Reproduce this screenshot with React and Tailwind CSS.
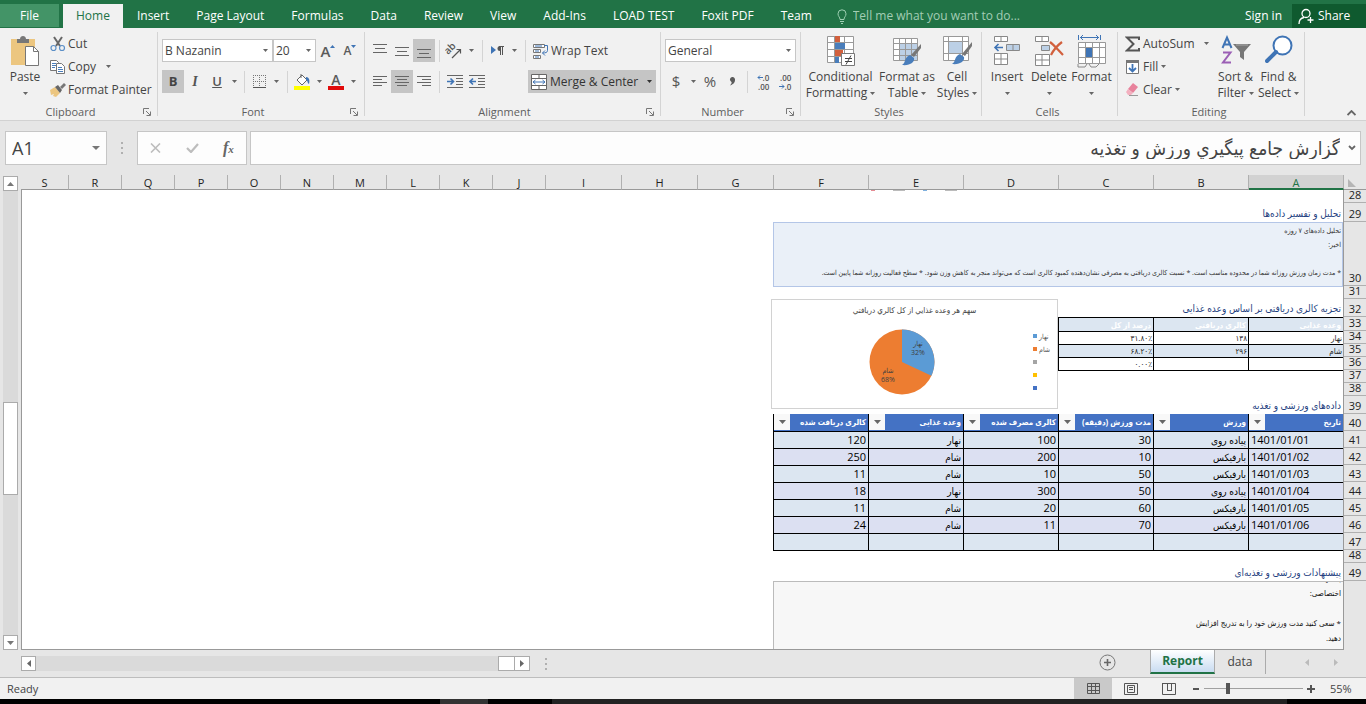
import { useState } from 'react';

const TABS = ['Home', 'Insert', 'Page Layout', 'Formulas', 'Data', 'Review', 'View', 'Add-Ins', 'LOAD TEST', 'Foxit PDF', 'Team'];

const COLUMNS = [
  { name: 'S', width: 'flex-1' },
  { name: 'R', width: 'w-[53px]' },
  { name: 'Q', width: 'w-[53px]' },
  { name: 'P', width: 'w-[53px]' },
  { name: 'O', width: 'w-[53px]' },
  { name: 'N', width: 'w-[53px]' },
  { name: 'M', width: 'w-[53px]' },
  { name: 'L', width: 'w-[53px]' },
  { name: 'K', width: 'w-[53px]' },
  { name: 'J', width: 'w-[53px]' },
  { name: 'I', width: 'w-[76px]' },
  { name: 'H', width: 'w-[76px]' },
  { name: 'G', width: 'w-[76px]' },
  { name: 'F', width: 'w-[95px]' },
  { name: 'E', width: 'w-[95px]' },
  { name: 'D', width: 'w-[95px]' },
  { name: 'C', width: 'w-[95px]' },
  { name: 'B', width: 'w-[95px]' },
  { name: 'A', width: 'w-[95px]' },
];

const ROWS = [
  [28, 'h-[13px]'], [29, 'h-[19px]'], [30, 'h-[64px]'], [31, 'h-[13px]'], [32, 'h-[18px]'],
  [33, 'h-[14px]'], [34, 'h-[13px]'], [35, 'h-[13px]'], [36, 'h-[13px]'], [37, 'h-[13px]'],
  [38, 'h-[13px]'], [39, 'h-[18px]'], [40, 'h-[17px]'], [41, 'h-[17px]'], [42, 'h-[17px]'],
  [43, 'h-[17px]'], [44, 'h-[17px]'], [45, 'h-[17px]'], [46, 'h-[17px]'], [47, 'h-[17px]'],
  [48, 'h-[13px]'], [49, 'h-[18px]'],
];

const MEALS = [
  ['نهار', '۱۳۸', '۳۱.۸۰٪'],
  ['شام', '۲۹۶', '۶۸.۲۰٪'],
  ['', '', '۰.۰۰٪'],
];

const LOG_HEAD = ['تاریخ', 'ورزش', 'مدت ورزش (دقیقه)', 'کالری مصرف شده', 'وعده غذایی', 'کالری دریافت شده'];

const LOG = [
  ['1401/01/01', 'پیاده روی', '30', '100', 'نهار', '120'],
  ['1401/01/02', 'بارفیکس', '10', '200', 'شام', '250'],
  ['1401/01/03', 'بارفیکس', '50', '10', 'شام', '11'],
  ['1401/01/04', 'پیاده روی', '50', '300', 'نهار', '18'],
  ['1401/01/05', 'بارفیکس', '60', '20', 'شام', '11'],
  ['1401/01/06', 'بارفیکس', '70', '11', 'شام', '24'],
  ['', '', '', '', '', ''],
];

const LEGEND = [
  ['نهار', 'bg-[#5b9bd5]'],
  ['شام', 'bg-[#ed7d31]'],
  ['', 'bg-[#a5a5a5]'],
  ['', 'bg-[#ffc000]'],
  ['', 'bg-[#4472c4]'],
];

function Svg({ w = 16, h = 16, children, className = '' }) {
  return (
    <svg width={w} height={h} viewBox={`0 0 ${w} ${h}`} fill="none" className={`shrink-0 ${className}`} aria-hidden="true">
      {children}
    </svg>
  );
}

function Caret({ className = 'text-[#666]' }) {
  return (
    <Svg w={5} h={3} className={className}>
      <path d="M0 0h5L2.500 3z" fill="currentColor" />
    </Svg>
  );
}

function CaretButton({ label, className = 'w-4' }) {
  return (
    <button type="button" aria-label={label} className={`flex h-[23px] shrink-0 items-center justify-center ${className}`}>
      <Caret />
    </button>
  );
}

function ToolButton({ label, active = false, width = 'w-[22px]', children }) {
  return (
    <button
      type="button"
      aria-label={label}
      aria-pressed={active}
      className={`flex h-[23px] shrink-0 items-center justify-center ${width} ${active ? 'bg-[#c5c5c5]' : 'hover:bg-[#e1e1e1]'}`}
    >
      {children}
    </button>
  );
}

function Divider({ className = '' }) {
  return <span className={`h-[22px] w-px shrink-0 bg-[#d4d4d4] ${className}`} />;
}

function Group({ label, width, launcher = false, children }) {
  return (
    <section className={`flex shrink-0 items-stretch pt-1 ${width}`} aria-label={label}>
      <div className="flex min-w-0 flex-1 flex-col">
        <div className="flex h-[72px] items-start">{children}</div>
        <div className="flex h-4 items-center pr-1">
          <span className="flex-1 text-center text-[11px] leading-4 text-[#5e5e5e]">{label}</span>
          {launcher && (
            <button type="button" aria-label={`${label} settings`} className="flex h-3 w-3 items-center justify-center">
              <Svg w={8} h={8}>
                <path d="M.5 6V.5H6M3 3l4 4M7.500 3.500v4h-4" stroke="#777" />
              </Svg>
            </button>
          )}
        </div>
      </div>
      <span className="mb-1 w-px bg-[#d4d4d4]" />
    </section>
  );
}

function Picker({ label, value, width }) {
  return (
    <span className={`relative flex h-[23px] shrink-0 ${width}`}>
      <select
        aria-label={label}
        defaultValue={value}
        className="h-full w-full appearance-none border border-[#c6c6c6] bg-white pl-[2px] text-xs leading-4 text-[#444] outline-none"
      >
        <option>{value}</option>
      </select>
      <Caret className="pointer-events-none absolute right-[5px] top-[10px] text-[#666]" />
    </span>
  );
}

function BigButton({ icon, lines, width, caretBelow = false }) {
  return (
    <button type="button" className={`flex shrink-0 flex-col items-center whitespace-nowrap pt-[3px] text-xs leading-4 text-[#444] ${width}`}>
      <span className="flex h-[34px] items-start">{icon}</span>
      <span>{lines[0]}</span>
      {caretBelow ? (
        <span className="flex h-4 items-center"><Caret /></span>
      ) : (
        <span className="flex items-center gap-[3px]">{lines[1]}<Caret /></span>
      )}
    </button>
  );
}

function SmallButton({ icon, label, caret = false, gap = 'gap-[3px]' }) {
  return (
    <button type="button" className={`flex h-[23px] items-center whitespace-nowrap text-xs leading-4 text-[#444] ${gap}`}>
      <span className="flex items-center gap-[2px]">{icon}{label}</span>
      {caret && <Caret />}
    </button>
  );
}

const PasteIcon = (
  <Svg w={30} h={32}>
    <path d="M1 4h24v26H1z" fill="#ecc680" />
    <path d="M7 4h3c0-4 6-4 6 0h3v4H7z" fill="#777" />
    <path d="M15.500 11.500h8l5 5v14h-13z" fill="#fff" stroke="#777" />
    <path d="M23.500 11.500v5h5" stroke="#777" />
  </Svg>
);

const CutIcon = (
  <Svg>
    <path d="M4 1l6 9M12 1L6 10" stroke="#666" strokeWidth="2" />
    <circle cx="3.500" cy="12" r="2.500" stroke="#5b8fc7" strokeWidth="1.200" />
    <circle cx="12" cy="12" r="2.500" stroke="#5b8fc7" strokeWidth="1.200" />
  </Svg>
);

const CopyIcon = (
  <Svg>
    <path d="M.5 1.500h6l2 2v8h-8z" fill="#fff" stroke="#777" />
    <path d="M2 4.500h4M2 6.500h4M2 8.500h3" stroke="#4a7ebb" />
    <path d="M6.500 4.500h5l3 3v7h-8z" fill="#fff" stroke="#777" />
    <path d="M8 8.500h4M8 10.500h5M8 12.500h5" stroke="#4a7ebb" />
  </Svg>
);

const PainterIcon = (
  <Svg>
    <path d="M0 8l5-3 5 6-4 4-3-1 1-2-3 1z" fill="#ecc680" />
    <path d="M5 5l3-2 4 5-2 3z" fill="#666" />
    <path d="M10 5l4-4 2 2-4 4z" fill="#777" />
  </Svg>
);

const ConditionalIcon = (
  <Svg w={28} h={32}>
    <path d="M.5 1.500h26v26H.5zM7.500 1v26M17.500 1v26M.5 7.500h26M.5 14.500h26M.5 21.500h26" fill="#fff" stroke="#999" />
    <path d="M8 1h5v6H8zM8 15h8v6H8z" fill="#d2603d" />
    <path d="M8 8h10v6H8zM8 22h4v6H8z" fill="#4a7ebb" />
    <path d="M14.500 18.500h13v12h-13z" fill="#fff" stroke="#777" />
    <path d="M18 23.500h7M18 26.500h7M24 20.500l-5 9" stroke="#444" />
  </Svg>
);

const FormatTableIcon = (
  <Svg w={30} h={32}>
    <path d="M1.500 3.500h24v22h-24z" fill="#fff" />
    <path d="M8 9h18v17H8z" fill="#bcd0e6" />
    <path d="M1.500 3.500h24v22h-24zM7.500 3v23M13.500 3v23M19.500 3v23M1.500 8.500h24M1.500 14.500h24M1.500 20.500h24" stroke="#999" />
    <path d="M29 9v4l-7 9-3-2z" fill="#777" />
    <path d="M18 20l4 3c1 4-4 8-12 7 4-2 2-8 8-10z" fill="#4a7ebb" />
  </Svg>
);

const CellStylesIcon = (
  <Svg w={30} h={32}>
    <path d="M1.500 1.500h25v24h-25zM6.500 1v24M20.500 1v24M1.500 6.500h25M1.500 18.500h25" fill="#fff" stroke="#999" />
    <path d="M7 7h13v11H7z" fill="#bcd0e6" />
    <path d="M30 7v4l-7 10-3-2z" fill="#777" />
    <path d="M18 19l4 3c1 4-4 8-12 7 4-2 2-8 8-10z" fill="#4a7ebb" />
  </Svg>
);

const InsertIcon = (
  <Svg w={28} h={32}>
    <path d="M1.500 1.500h13v5h-13zM8 1v6M1.500 18.500h13v11h-13zM8 18v12M1.500 24h13" fill="#fff" stroke="#888" />
    <path d="M13.500 9.500h13v6h-13zM20 9v7" fill="#bcd0e6" stroke="#888" />
    <path d="M10 12.500H2M5.500 9l-3.500 3.500 3.500 3.500" stroke="#3f74b5" strokeWidth="1.600" />
  </Svg>
);

const DeleteIcon = (
  <Svg w={30} h={32}>
    <path d="M1.500 1.500h13v5h-13zM8 1v6M1.500 19.500h14v11h-14zM8 19v12M1.500 25h14" fill="#fff" stroke="#888" />
    <path d="M7.500 10.500h8v5h-8z" fill="#bcd0e6" stroke="#888" />
    <path d="M16 7c4 3 8 8 13 13M28 7c-4 3-8 7-11 13" stroke="#d2603d" strokeWidth="2.200" />
  </Svg>
);

const FormatIcon = (
  <Svg w={30} h={33}>
    <path d="M1.500 0v5M23.500 0v5M3 2.500h19M6 0L3.500 2.500 6 5M19 0l2.500 2.500L19 5" stroke="#3f74b5" />
    <path d="M1.500 7.500h27v21h-27zM8.500 7v22M15.500 7v22M22.500 7v22M1.500 12.500h27M1.500 22.500h27" fill="#fff" stroke="#999" />
    <path d="M9 13h6v9H9z" fill="#3f74b5" />
    <path d="M1 29v3h7l2-3M12 29l2 3h5l3-3" stroke="#888" />
  </Svg>
);

const SortIcon = (
  <Svg w={30} h={32}>
    <path d="M1.500 13L6 2.500 10.500 13M3 9.500h6" stroke="#3f74b5" strokeWidth="2" />
    <path d="M2 17.500h7.500L2 27.500h8" stroke="#9b5fb5" strokeWidth="2" />
    <path d="M12 9h18l-7 8v8l-4-3v-5z" fill="#777" />
    <path d="M15 10h12" stroke="#aaa" />
  </Svg>
);

const FindIcon = (
  <Svg w={28} h={32}>
    <circle cx="17.500" cy="10.500" r="9" fill="#fff" stroke="#3f74b5" strokeWidth="2" />
    <path d="M11 17L2 26" stroke="#3f74b5" strokeWidth="4" strokeLinecap="round" />
  </Svg>
);

function AlignIcon({ d }) {
  return (
    <Svg w={14} h={14}>
      <path d={d} stroke="#666" />
    </Svg>
  );
}

function TabBar() {
  const [tab, setTab] = useState('Home');
  return (
    <header className="flex h-7 shrink-0 items-end bg-[#217346] text-xs leading-4 text-white">
      <button type="button" className="mb-px mr-1 h-[23px] w-[59px] bg-[#439467]">File</button>
      <nav className="flex gap-px">
        {TABS.map((t) => (
          <button
            key={t}
            type="button"
            onClick={() => setTab(t)}
            className={`h-6 whitespace-nowrap px-[13px] ${t === tab ? 'bg-[#f1f1f1] text-[#217346]' : ''}`}
          >
            {t}
          </button>
        ))}
      </nav>
      <label className="ml-3 flex h-6 flex-1 items-center gap-[6px]">
        <Svg w={10} h={15}>
          <path d="M3 10.500C3 8 1 7.500 1 4.800a4 4 0 018 0C9 7.500 7 8 7 10.500zM3 12.500h4M4 14.500h2" stroke="#9fd0b3" />
        </Svg>
        <input
          aria-label="Tell me"
          placeholder="Tell me what you want to do..."
          className="w-full max-w-[200px] bg-transparent outline-none placeholder:text-[#a3cdb5]"
        />
      </label>
      <button type="button" className="h-6 px-[10px]">Sign in</button>
      <button type="button" className="flex h-6 w-[74px] items-center gap-1 bg-[#0f5a2f] pl-[6px]">
        <Svg w={16} h={16}>
          <circle cx="8" cy="5.500" r="4" stroke="#fff" strokeWidth="1.300" />
          <path d="M1 16c0-4 2-6 5-6.500M12.500 9v6M9.500 12h6" stroke="#fff" strokeWidth="1.300" />
        </Svg>
        Share
      </button>
    </header>
  );
}

function Ribbon() {
  return (
    <div className="flex h-[93px] shrink-0 border-b border-[#d2d2d2] bg-[#f1f1f1]">
      <Group label="Clipboard" width="w-[158px]" launcher>
        <BigButton icon={PasteIcon} lines={['Paste']} width="w-[50px]" caretBelow />
        <div className="flex flex-col items-start">
          <SmallButton icon={CutIcon} label="Cut" />
          <SmallButton icon={CopyIcon} label="Copy" caret gap="gap-[10px]" />
          <SmallButton icon={PainterIcon} label="Format Painter" />
        </div>
      </Group>

      <Group label="Font" width="w-[207px]" launcher>
        <div className="flex flex-col gap-2 pl-1 pt-[7px]">
          <div className="flex">
            <Picker label="Font" value="B Nazanin" width="w-[111px]" />
            <Picker label="Font size" value="20" width="w-[43px]" />
            <ToolButton label="Increase font size" width="w-6">
              <span className="text-[15px] font-semibold leading-5 text-[#5b5b5b]">A</span>
              <Svg w={5} h={12}><path d="M0 3h5L2.500 0z" fill="#3f74b5" /></Svg>
            </ToolButton>
            <ToolButton label="Decrease font size" width="w-5">
              <span className="text-xs font-semibold leading-5 text-[#5b5b5b]">A</span>
              <Svg w={5} h={12}><path d="M0 0h5L2.500 3z" fill="#3f74b5" /></Svg>
            </ToolButton>
          </div>
          <div className="flex items-center">
            <ToolButton label="Bold" active><b className="text-[13px] text-[#444]">B</b></ToolButton>
            <ToolButton label="Italic"><i className="font-['Liberation_Serif',serif] text-sm font-bold text-[#555]">I</i></ToolButton>
            <ToolButton label="Underline"><span className="text-[13px] font-semibold text-[#555] underline">U</span></ToolButton>
            <CaretButton label="Underline style" className="w-3" />
            <Divider className="mx-1" />
            <ToolButton label="Borders" width="w-5">
              <Svg w={13} h={13}>
                <path d="M.5 0v13M12.500 0v13M6.500 0v13M0 .5h13M0 6.500h13" stroke="#777" strokeDasharray="1 1" />
                <path d="M0 12.500h13" stroke="#555" />
              </Svg>
            </ToolButton>
            <CaretButton label="Border style" className="w-[14px]" />
            <Divider className="mx-1" />
            <ToolButton label="Fill color" width="w-5">
              <Svg w={17} h={17}>
                <path d="M8 2l5 5-5 5-5-5zM7 5V1" fill="#fff" stroke="#666" />
                <path d="M12 4c3 0 4 3 3 7-2-1-1-4-3-4z" fill="#3f74b5" />
                <path d="M0 13h16v4H0z" fill="#ffff00" />
              </Svg>
            </ToolButton>
            <CaretButton label="Pick fill color" className="w-[14px]" />
            <ToolButton label="Font color" width="w-5">
              <span className="flex flex-col items-center">
                <span className="text-[14px] font-semibold leading-[13px] text-[#5b5b5b]">A</span>
                <span className="h-1 w-4 bg-[#e00b0b]" />
              </span>
            </ToolButton>
            <CaretButton label="Pick font color" className="w-[14px]" />
          </div>
        </div>
      </Group>

      <Group label="Alignment" width="w-[296px]" launcher>
        <div className="flex flex-col gap-2 pl-1 pt-[7px]">
          <div className="flex items-center">
            <ToolButton label="Top align"><AlignIcon d="M0 .5h14M2 4.500h10M0 8.500h14" /></ToolButton>
            <ToolButton label="Middle align"><AlignIcon d="M0 3.500h14M2 7.500h10M0 11.500h14" /></ToolButton>
            <ToolButton label="Bottom align" active><AlignIcon d="M0 5.500h14M2 9.500h10M0 13.500h14" /></ToolButton>
            <Divider className="mx-1" />
            <ToolButton label="Orientation" width="w-5">
              <Svg w={18} h={18}>
                <text x="3" y="13" fontSize="10" fontWeight="600" fill="#555" transform="rotate(-45 3 13)">ab</text>
                <path d="M7 16l8-8M11.500 7.500H15.500V11.500" stroke="#555" strokeWidth="1.200" />
              </Svg>
            </ToolButton>
            <CaretButton label="Orientation options" className="w-[14px]" />
            <Divider className="mx-1" />
            <ToolButton label="Text direction" width="w-5">
              <Svg w={13} h={12}>
                <path d="M0 1l5 4-5 4z" fill="#3f74b5" />
                <path d="M9 1a2.500 2.500 0 000 5z" fill="#555" />
                <path d="M9.500 1v9M11.500 1v9M8 1.500h5" stroke="#555" />
              </Svg>
            </ToolButton>
            <CaretButton label="Text direction options" className="w-[14px]" />
            <Divider className="ml-1 mr-[7px]" />
            <SmallButton
              label="Wrap Text"
              icon={(
                <Svg>
                  <path d="M.5 1.500h11v3H.5zM.5 6.500h7v3h-7zM.5 12.500h7v3h-7z" fill="#fff" stroke="#777" />
                  <path d="M2 3h7M2 8h4M2 14h4M11 2.500h3.500v5c0 2-2 2.500-5 2.500M12 7.500L9.500 10l2.500 2.500" stroke="#3f74b5" />
                </Svg>
              )}
            />
          </div>
          <div className="flex items-center">
            <ToolButton label="Align left"><AlignIcon d="M0 1.500h14M0 4.500h9M0 7.500h14M0 10.500h9" /></ToolButton>
            <ToolButton label="Center" active><AlignIcon d="M0 1.500h14M2 4.500h10M0 7.500h14M2 10.500h10" /></ToolButton>
            <ToolButton label="Align right"><AlignIcon d="M0 1.500h14M5 4.500h9M0 7.500h14M5 10.500h9" /></ToolButton>
            <Divider className="mx-1" />
            <ToolButton label="Decrease indent">
              <Svg w={17} h={13}>
                <path d="M0 .5h16M9 3.500h7M9 6.500h7M9 9.500h7M0 12.500h16" stroke="#666" />
                <path d="M0 6.500h6M3.500 3.500l3 3-3 3" stroke="#3f74b5" strokeWidth="1.600" />
              </Svg>
            </ToolButton>
            <ToolButton label="Increase indent">
              <Svg w={17} h={13}>
                <path d="M0 .5h16M9 3.500h7M9 6.500h7M9 9.500h7M0 12.500h16" stroke="#666" />
                <path d="M1 6.500h6M4 3.500l-3 3 3 3" stroke="#3f74b5" strokeWidth="1.600" />
              </Svg>
            </ToolButton>
            <button type="button" className="ml-10 flex h-[23px] items-center gap-[3px] whitespace-nowrap bg-[#c5c5c5] pl-[3px] pr-1 text-xs text-[#333]">
              <Svg>
                <path d="M.5 .5h15v15H.5zM0 4.500h16M0 11.500h16M8 0v4M8 12v4" fill="#fff" stroke="#666" />
                <path d="M2 8h12M4.500 6L2 8l2.500 2M11.500 6L14 8l-2.500 2" stroke="#3f74b5" />
              </Svg>
              <span className="mr-[6px]">Merge &amp; Center</span>
              <Caret className="text-[#333]" />
            </button>
          </div>
        </div>
      </Group>

      <Group label="Number" width="w-[140px]" launcher>
        <div className="flex w-full flex-col gap-2 pl-1 pr-1 pt-[7px]">
          <Picker label="Number format" value="General" width="w-full" />
          <div className="flex items-center text-[15px] text-[#555]">
            <ToolButton label="Currency">$</ToolButton>
            <CaretButton label="Currency options" className="w-3" />
            <ToolButton label="Percent">%</ToolButton>
            <ToolButton label="Comma style">
              <Svg w={6} h={9}><path d="M3 0a2.500 2.500 0 00-1 4.500c1 .5 1 1.500-1 4 4-1.500 5-3.500 5-5.500A2.700 2.700 0 003 0z" fill="#5b5b5b" /></Svg>
            </ToolButton>
            <Divider className="mx-1" />
            <ToolButton label="Increase decimal">
              <span className="flex flex-col text-[8px] font-semibold leading-[9px]">
                <span className="flex items-center"><Svg w={6} h={5}><path d="M6 2.500H1M3 .5l-2 2 2 2" stroke="#3f74b5" /></Svg>.0</span>
                <span className="text-right">.00</span>
              </span>
            </ToolButton>
            <ToolButton label="Decrease decimal">
              <span className="flex flex-col text-[8px] font-semibold leading-[9px]">
                <span className="text-right">.00</span>
                <span className="flex items-center"><Svg w={6} h={5}><path d="M0 2.500h5M3 .5l2 2-2 2" stroke="#3f74b5" /></Svg>.0</span>
              </span>
            </ToolButton>
          </div>
        </div>
      </Group>

      <Group label="Styles" width="w-[181px]">
        <BigButton icon={ConditionalIcon} lines={['Conditional', 'Formatting']} width="w-[79px]" />
        <BigButton icon={FormatTableIcon} lines={['Format as', 'Table']} width="w-[54px]" />
        <BigButton icon={CellStylesIcon} lines={['Cell', 'Styles']} width="w-[46px]" />
      </Group>

      <Group label="Cells" width="w-[136px]">
        <div className="flex pl-1">
          <BigButton icon={InsertIcon} lines={['Insert']} width="w-[42px]" caretBelow />
          <BigButton icon={DeleteIcon} lines={['Delete']} width="w-[42px]" caretBelow />
          <BigButton icon={FormatIcon} lines={['Format']} width="w-[43px]" caretBelow />
        </div>
      </Group>

      <Group label="Editing" width="w-[187px]">
        <div className="flex w-[96px] shrink-0 flex-col items-start pl-[7px]">
          <SmallButton
            label="AutoSum"
            caret
            gap="gap-[9px]"
            icon={<Svg><path d="M14 4V1.500H2L8.500 8 2 14.500h12V12" stroke="#555" strokeWidth="2" /></Svg>}
          />
          <SmallButton
            label="Fill"
            caret
            icon={(
              <Svg>
                <path d="M1.500 1.500h12v13h-12z" fill="#fff" stroke="#777" />
                <path d="M1 1h13v3H1z" fill="#777" />
                <path d="M7.500 5v7M4 9l3.500 3.500L11 9" stroke="#3f74b5" strokeWidth="1.800" />
              </Svg>
            )}
          />
          <SmallButton
            label="Clear"
            caret
            icon={(
              <Svg>
                <path d="M8 1l5 4-5 6-5-4z" fill="#e8829c" />
                <path d="M3 7l5 4-2 2H3L1 10z" fill="#f3b0bf" />
                <path d="M4 13.500h9" stroke="#999" />
              </Svg>
            )}
          />
        </div>
        <BigButton icon={SortIcon} lines={['Sort &', 'Filter']} width="w-[43px]" />
        <BigButton icon={FindIcon} lines={['Find &', 'Select']} width="w-[43px]" />
      </Group>

      <div className="flex flex-1 items-end justify-end pb-1 pr-[10px]">
        <button type="button" aria-label="Collapse ribbon">
          <Svg w={9} h={6}><path d="M.5 5l4-4 4 4" stroke="#666" strokeWidth="1.800" /></Svg>
        </button>
      </div>
    </div>
  );
}

function FormulaBar() {
  return (
    <div className="flex h-[54px] shrink-0 items-center pl-[5px] pr-[5px]">
      <div className="flex h-[34px] w-[102px] items-center border border-[#c6c6c6] bg-[#fdfdfd] pr-[6px]">
        <input aria-label="Name box" defaultValue="A1" className="w-full min-w-0 bg-transparent pl-[6px] text-[18px] text-[#444] outline-none" />
        <button type="button" aria-label="Show names">
          <Svg w={8} h={4}><path d="M0 0h8L4 4z" fill="#777" /></Svg>
        </button>
      </div>
      <Svg w={30} h={12}>
        <path d="M14 0h2v2h-2zM14 5h2v2h-2zM14 10h2v2h-2z" fill="#b0b0b0" />
      </Svg>
      <div className="flex h-[34px] w-[110px] items-center justify-around border border-[#c6c6c6] bg-[#fdfdfd]">
        <button type="button" aria-label="Cancel">
          <Svg w={11} h={10}><path d="M1 .5l9 9M10 .5l-9 9" stroke="#bdbdbd" strokeWidth="1.600" /></Svg>
        </button>
        <button type="button" aria-label="Enter">
          <Svg w={13} h={10}><path d="M1 5l4 4 7-8" stroke="#bdbdbd" strokeWidth="2.200" /></Svg>
        </button>
        <button type="button" aria-label="Insert function" className="font-['Liberation_Serif',serif] text-[16px] font-bold italic leading-5 text-[#666]">
          f<span className="text-[11px]">x</span>
        </button>
      </div>
      <div className="ml-[3px] flex h-[34px] flex-1 items-center border border-[#c6c6c6] bg-[#fdfdfd] pr-1">
        <input
          aria-label="Formula"
          dir="rtl"
          defaultValue="گزارش جامع پیگیري ورزش و تغذیه"
          className="h-full min-w-0 flex-1 bg-transparent pr-2 font-['DejaVu_Sans_Condensed','DejaVu_Sans',sans-serif] text-[19px] text-[#444] outline-none"
        />
        <button type="button" aria-label="Expand formula bar">
          <Svg w={8} h={6}><path d="M1 1l3 3 3-3" stroke="#666" strokeWidth="1.800" /></Svg>
        </button>
      </div>
    </div>
  );
}

function PieChart() {
  return (
    <figure className="flex h-[110px] w-[287px] shrink-0 flex-col border border-[#d2d2d2] bg-white">
      <figcaption dir="rtl" className="pt-1 text-center text-[8px] leading-3 text-[#444]">سهم هر وعده غذايي از کل کالري دریافتي</figcaption>
      <div className="flex flex-1 items-center justify-end gap-[98px]">
        <svg width="66" height="66" viewBox="0 0 66 66" className="text-[7px]" role="img" aria-label="نهار 32%، شام 68%">
          <circle cx="33" cy="33" r="32.500" fill="#ed7d31" />
          <path d="M33 33V.5A32.500 32.500 0 0 1 62.400 46.800z" fill="#5b9bd5" />
          <text x="49" y="17" textAnchor="middle" fill="#404040">نهار</text>
          <text x="49" y="26" textAnchor="middle" fill="#404040">32%</text>
          <text x="19" y="44" textAnchor="middle" fill="#404040">شام</text>
          <text x="19" y="53" textAnchor="middle" fill="#404040">68%</text>
        </svg>
        <ul className="w-6 text-[7px] leading-[13px] text-[#555]">
          {LEGEND.map(([name, color], i) => (
            <li key={i} className="flex h-[13px] items-center gap-[2px]">
              <span className={`h-1 w-1 shrink-0 ${color}`} />
              {name}
            </li>
          ))}
        </ul>
      </div>
    </figure>
  );
}

function MealTable() {
  return (
    <table dir="rtl" className="w-[286px] table-fixed border-collapse text-[8px] leading-[10px] text-[#222]">
      <thead>
        <tr className="h-[14px] bg-[#dce6f1] text-white">
          {['وعده غذایی', 'کالری دریافتی', 'درصد از کل'].map((h) => (
            <th key={h} className="border border-black px-[2px] py-0 text-right font-bold">{h}</th>
          ))}
        </tr>
      </thead>
      <tbody>
        {MEALS.map((row, i) => (
          <tr key={i} className={`h-[13px] ${i === 1 ? 'bg-[#dce6f1]' : 'bg-white'}`}>
            {row.map((cell, j) => (
              <td key={j} className="border border-black px-px py-0 text-right"><bdi dir={j ? 'ltr' : 'rtl'}>{cell}</bdi></td>
            ))}
          </tr>
        ))}
      </tbody>
    </table>
  );
}

function LogTable() {
  return (
    <table dir="rtl" className="-mr-px w-[571px] shrink-0 table-fixed border-collapse text-[11px] leading-[14px] text-black">
      <thead>
        <tr className="h-[17px] bg-[#4472c4] text-white">
          {LOG_HEAD.map((h) => (
            <th key={h} className="border-x border-black p-0">
              <div className="flex items-center justify-between">
                <span className="whitespace-nowrap pr-[2px] text-[8px] font-bold">{h}</span>
                <button type="button" aria-label={`فیلتر ${h}`} className="flex h-4 w-4 shrink-0 items-center justify-center bg-[#f8f8f8]">
                  <Svg w={7} h={4}><path d="M0 0h7L3.500 4z" fill="#666" /></Svg>
                </button>
              </div>
            </th>
          ))}
        </tr>
      </thead>
      <tbody>
        {LOG.map((row, i) => (
          <tr key={i} className={`h-[17px] ${i % 2 ? 'bg-[#dce0f2]' : 'bg-[#dce6f1]'}`}>
            {row.map((cell, j) => (
              <td
                key={j}
                className={`border border-black px-[2px] py-0 ${j === 0 ? 'text-left' : 'text-right'} ${j === 1 || j === 4 ? 'text-[10px]' : ''}`}
              >
                {cell}
              </td>
            ))}
          </tr>
        ))}
      </tbody>
    </table>
  );
}

function SectionTitle({ children, height = 'h-[18px]' }) {
  return (
    <h2 dir="rtl" className={`flex items-center whitespace-nowrap pr-[2px] text-[10px] font-normal leading-3 text-[#1f3f7f] ${height}`}>
      {children}
    </h2>
  );
}

function Sheet() {
  return (
    <main className="flex min-w-0 flex-1 flex-col items-end overflow-hidden border-b border-l border-[#999] bg-white font-['Open_Sans','DejaVu_Sans_Condensed','DejaVu_Sans',sans-serif]">
      <div className="flex h-[13px] w-[570px] shrink-0 items-start gap-[18px] pl-[98px]">
        <span className="h-px w-1 bg-[#e58b93]" />
        <span className="h-px w-3 bg-[#bbb]" />
        <span className="h-px w-1 bg-[#7fb0de]" />
        <span className="h-px w-3 bg-[#bbb]" />
      </div>
      <SectionTitle height="h-[19px]">تحلیل و تفسیر داده‌ها</SectionTitle>
      <div dir="rtl" className="h-[65px] w-[570px] shrink-0 whitespace-nowrap border border-[#b4c6e7] bg-[#eaf0f8] pr-px pt-px text-[7px] leading-[14px] text-[#333]">
        <p>تحلیل داده‌های ۷ روزه</p>
        <p>اخیر:</p>
        <br />
        <p>* مدت زمان ورزش روزانه شما در محدوده مناسب است. * نسبت کالری دریافتی به مصرفی نشان‌دهنده کمبود کالری است که می‌تواند منجر به کاهش وزن شود. * سطح فعالیت روزانه شما پایین است.</p>
      </div>

      <div className="mt-3 flex h-[115px] shrink-0 justify-end">
        <PieChart />
        <div className="flex w-[285px] shrink-0 flex-col justify-between">
          <div>
            <SectionTitle>تجزیه کالری دریافتی بر اساس وعده غذایی</SectionTitle>
            <MealTable />
          </div>
          <SectionTitle>داده‌های ورزشی و تغذیه</SectionTitle>
        </div>
      </div>

      <LogTable />

      <div className="mt-3 shrink-0">
        <SectionTitle>پیشنهادات ورزشی و تغذیه‌ای</SectionTitle>
      </div>
      <div dir="rtl" className="flex w-[570px] flex-1 flex-col justify-end overflow-hidden border-l border-t border-[#bbb] bg-[#f7f7f7] pb-1 pr-[2px] text-[8px] leading-[15px] text-[#111]">
        <p>پیشنهادات</p>
        <p>اختصاصی:</p>
        <br />
        <p>* سعی کنید مدت ورزش خود را به تدریج افزایش</p>
        <p>دهید.</p>
      </div>
    </main>
  );
}

function Workbook() {
  return (
    <div className="flex min-h-0 flex-1 flex-col">
      <div className="flex h-[15px] shrink-0 pl-[21px] text-[11px] leading-[15px] text-[#222]">
        {COLUMNS.map((c) => (
          <div
            key={c.name}
            className={`border-r border-[#b0b0b0] text-center ${c.width} ${c.name === 'A' ? 'border-b-2 border-b-[#217346] bg-[#d2d2d2] text-[#217346]' : 'border-b border-b-[#999]'}`}
          >
            {c.name}
          </div>
        ))}
        <div className="flex w-[22px] items-end border-b border-[#999] pb-[2px] pl-1">
          <Svg w={8} h={8}><path d="M0 0v8h8z" fill="#b5b5b5" /></Svg>
        </div>
      </div>
      <div className="flex min-h-0 flex-1">
        <div className="flex w-[21px] shrink-0 flex-col items-start pl-[3px]">
          <button type="button" aria-label="Scroll up" className="-mt-[14px] flex h-[15px] w-[15px] shrink-0 items-center justify-center border border-[#ababab] bg-white">
            <Svg w={7} h={4}><path d="M0 4h7L3.500 0z" fill="#777" /></Svg>
          </button>
          <div className="flex w-[15px] flex-1 flex-col justify-center bg-[#dadada] pt-[71px]">
            <div className="h-[93px] border border-[#ababab] bg-white" />
          </div>
          <button type="button" aria-label="Scroll down" className="flex h-[15px] w-[15px] shrink-0 items-center justify-center border border-[#ababab] bg-white">
            <Svg w={7} h={4}><path d="M0 0h7L3.500 4z" fill="#777" /></Svg>
          </button>
        </div>
        <Sheet />
        <div className="flex w-[23px] shrink-0 flex-col border-l border-[#999] text-[11px] leading-[14px] text-[#222]">
          {ROWS.map(([n, height]) => (
            <div key={n} className={`flex shrink-0 items-end justify-center border-b border-[#b0b0b0] ${height}`}>{n}</div>
          ))}
        </div>
      </div>
    </div>
  );
}

function SheetTabs() {
  return (
    <div className="flex h-[28px] shrink-0 items-start border-b border-[#bdbdbd] pl-[21px]">
      <div className="mt-[6px] flex h-[15px] w-[509px] bg-[#dadada]">
        <button type="button" aria-label="Scroll left" className="flex w-[15px] items-center justify-center border border-[#ababab] bg-white">
          <Svg w={4} h={7}><path d="M4 0v7L0 3.500z" fill="#666" /></Svg>
        </button>
        <span className="ml-auto w-[17px] border border-[#ababab] bg-white" />
        <button type="button" aria-label="Scroll right" className="-ml-px flex w-4 items-center justify-center border border-[#ababab] bg-white">
          <Svg w={4} h={7}><path d="M0 0v7l4-3.500z" fill="#666" /></Svg>
        </button>
      </div>
      <Svg w={30} h={12} className="mt-2">
        <path d="M15 0h2v2h-2zM15 5h2v2h-2zM15 10h2v2h-2z" fill="#b0b0b0" />
      </Svg>
      <button type="button" aria-label="New sheet" className="ml-auto mr-[34px] mt-1">
        <Svg w={17} h={17}>
          <circle cx="8.500" cy="8.500" r="7.500" stroke="#777" />
          <path d="M8.500 5v7M5 8.500h7" stroke="#666" strokeWidth="1.600" />
        </Svg>
      </button>
      <button type="button" className="h-6 w-[65px] border-x border-b-2 border-[#ababab] border-b-[#217346] bg-gradient-to-b from-white to-[#c9dcf1] text-xs font-bold leading-5 text-[#217346]">Report</button>
      <button type="button" className="h-6 w-[51px] border-r border-[#ababab] text-xs leading-5 text-[#444]">data</button>
      <div className="flex h-6 w-[100px] items-center gap-[25px] pl-[39px]">
        <Svg w={4} h={7}><path d="M4 0v7L0 3.500z" fill="#bbb" /></Svg>
        <Svg w={4} h={7}><path d="M0 0v7l4-3.500z" fill="#bbb" /></Svg>
      </div>
    </div>
  );
}

function StatusBar() {
  return (
    <footer className="flex h-[21px] shrink-0 items-center bg-[#f1f1f1] text-[11px] leading-4 text-[#444]">
      <span className="flex-1 pl-[7px]">Ready</span>
      <button type="button" aria-label="Normal view" className="flex h-full w-[38px] items-center justify-center bg-[#c9c9c9]">
        <Svg w={13} h={11}><path d="M.5 .5h12v10H.5zM4.500 0v11M8.500 0v11M0 3.500h13M0 7.500h13" stroke="#555" /></Svg>
      </button>
      <button type="button" aria-label="Page layout view" className="flex h-full w-[38px] items-center justify-center">
        <Svg w={14} h={12}><path d="M.5 .5h13v11H.5zM3.500 2.500h7v7h-7zM5 4.500h4M5 6.500h4" stroke="#555" /></Svg>
      </button>
      <button type="button" aria-label="Page break view" className="flex h-full w-[38px] items-center justify-center">
        <Svg w={14} h={12}><path d="M.5 0v11.500h13V.5H.5M5.500 0v7M9.500 0v7M5 7.500h5" stroke="#555" /></Svg>
      </button>
      <button type="button" aria-label="Zoom out" className="ml-1">
        <Svg w={8} h={8}><path d="M1 4h6" stroke="#555" strokeWidth="2" /></Svg>
      </button>
      <input
        type="range"
        aria-label="Zoom"
        min="10"
        max="100"
        defaultValue="31"
        className="mx-1 h-3 w-[99px] appearance-none bg-[linear-gradient(#a0a0a0,#a0a0a0)] bg-[length:100%_1px] bg-center bg-no-repeat [&::-webkit-slider-thumb]:h-[11px] [&::-webkit-slider-thumb]:w-1 [&::-webkit-slider-thumb]:appearance-none [&::-webkit-slider-thumb]:bg-[#555]"
      />
      <button type="button" aria-label="Zoom in">
        <Svg w={8} h={8}><path d="M0 4h8M4 0v8" stroke="#555" strokeWidth="2" /></Svg>
      </button>
      <span className="w-[51px] pl-[15px]">55%</span>
    </footer>
  );
}

function App() {
  return (
    <div className="flex h-screen flex-col overflow-hidden bg-[#e6e6e6] font-['Open_Sans','DejaVu_Sans',sans-serif]">
      <TabBar />
      <Ribbon />
      <FormulaBar />
      <Workbook />
      <SheetTabs />
      <StatusBar />
      <div className="flex h-[5px] shrink-0 bg-black">
        <span className="ml-[440px] w-12 bg-[#333]" />
        <span className="ml-16 mr-[79px] flex-1 bg-[#222]" />
      </div>
    </div>
  );
}

export default App;
